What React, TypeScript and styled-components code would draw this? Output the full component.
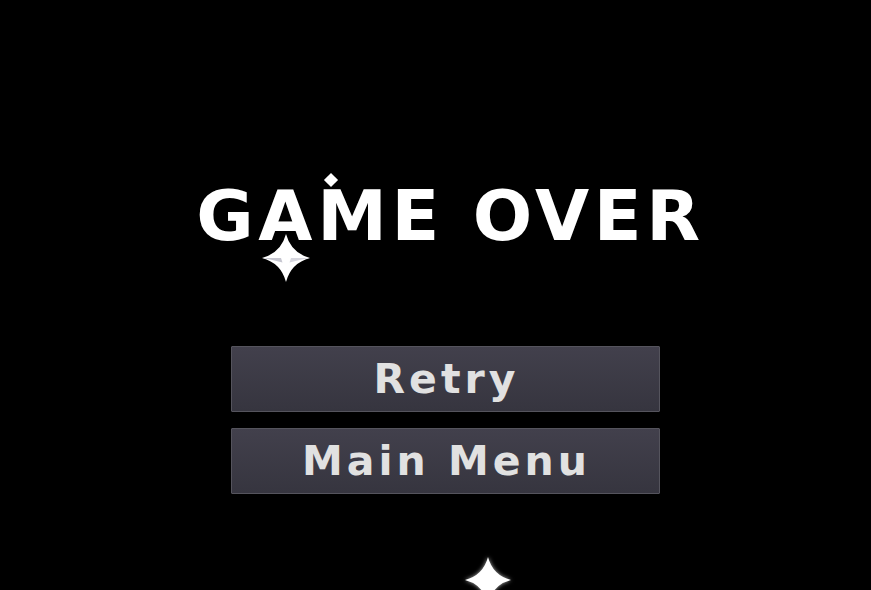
import styled, { createGlobalStyle } from 'styled-components';

const GlobalStyle = createGlobalStyle`
  html, body {
    margin: 0;
    padding: 0;
    background: #000;
  }
`;

const Screen = styled.div`
  position: relative;
  width: 871px;
  height: 590px;
  overflow: hidden;
  background: #000;
  font-family: 'DejaVu Sans', 'Liberation Sans', sans-serif;
  display: flex;
  flex-direction: column;
  align-items: center;
  padding: 181px 0 0 20px;
  box-sizing: border-box;
`;

const Title = styled.h1`
  margin: 0 0 95px;
  padding-left: 10px;
  font-size: 70px;
  line-height: 70px;
  font-weight: 700;
  letter-spacing: 4.6px;
  color: #fff;
  white-space: nowrap;
`;

const Menu = styled.div`
  display: flex;
  flex-direction: column;
  gap: 16px;
`;

const MenuButton = styled.button`
  width: 429px;
  height: 66px;
  display: flex;
  align-items: center;
  justify-content: center;
  padding: 0 0 0 2px;
  border: 1px solid #55545d;
  border-radius: 1px;
  background: linear-gradient(#42404c, #36353f);
  color: #e1e1e1;
  font-family: inherit;
  font-size: 41px;
  line-height: 41px;
  font-weight: 700;
  letter-spacing: 4px;
  cursor: pointer;
`;

const Sparkle = styled.svg<{ $x: number; $y: number; $size: number; $glow?: boolean }>`
  position: absolute;
  left: ${(p) => p.$x - p.$size / 2}px;
  top: ${(p) => p.$y - p.$size / 2}px;
  width: ${(p) => p.$size}px;
  height: ${(p) => p.$size}px;
  filter: ${(p) => (p.$glow ? 'drop-shadow(0 0 2px rgba(255,255,255,0.7))' : 'none')};
`;

// four-pointed sparkle; the flat ones get a shaded underside on the side arms
const Star = ({ x, y, size, glow }: { x: number; y: number; size: number; glow?: boolean }) => (
  <Sparkle $x={x} $y={y} $size={size} $glow={glow} viewBox="0 0 48 48">
    <path
      d="M24 0 Q29 19 48 24 Q29 29 24 48 Q19 29 0 24 Q19 19 24 0 Z"
      fill="#fff"
    />
    {!glow && (
      <>
        <path d="M1 24 L19 24 L20.5 28.5 Q11 26 1 24 Z" fill="#c6c6d0" />
        <path d="M47 24 L29 24 L27.5 28.5 Q37 26 47 24 Z" fill="#d6d6de" />
      </>
    )}
  </Sparkle>
);

const Diamond = styled.div`
  position: absolute;
  left: 326px;
  top: 175px;
  width: 10px;
  height: 10px;
  background: #fff;
  transform: rotate(45deg);
`;

export default function App() {
  return (
    <>
      <GlobalStyle />
      <Screen>
        <Title>GAME OVER</Title>
        <Menu>
          <MenuButton>Retry</MenuButton>
          <MenuButton>Main Menu</MenuButton>
        </Menu>
        <Diamond />
        <Star x={286} y={258} size={48} />
        <Star x={488} y={580} size={46} glow />
      </Screen>
    </>
  );
}
